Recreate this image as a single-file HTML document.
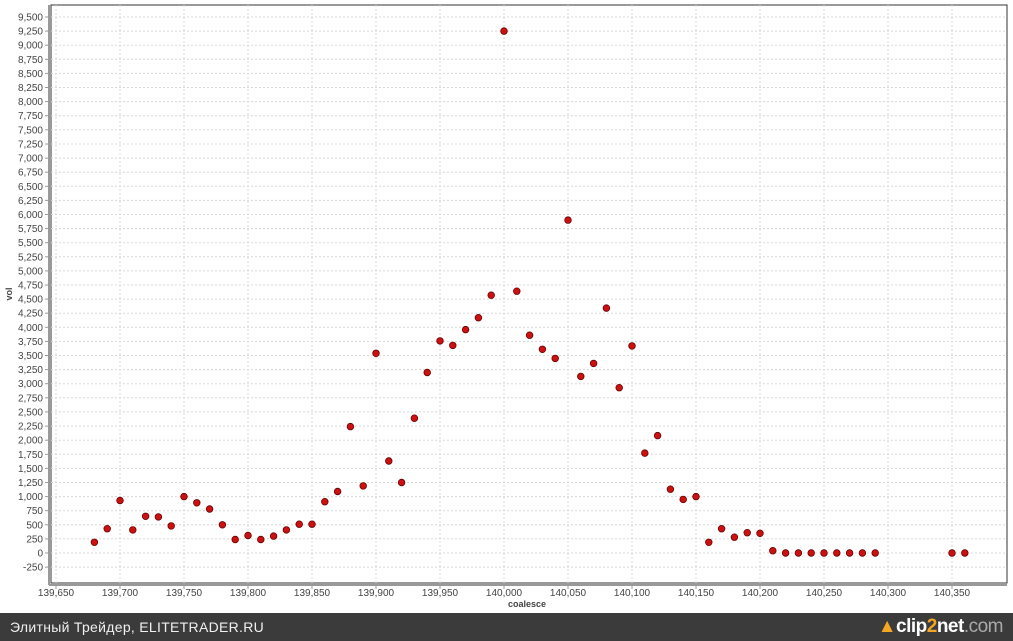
<!DOCTYPE html>
<html><head><meta charset="utf-8"><style>
html,body{margin:0;padding:0;width:1013px;height:641px;overflow:hidden;background:#fff;font-family:"Liberation Sans","DejaVu Sans",sans-serif}
#foot{position:absolute;left:0;top:613px;width:1013px;height:28px;background:#3b3b3b;color:#f0f0f0;font-size:14px;line-height:28px}
</style></head><body>
<svg id="s" width="1013" height="613" style="position:absolute;left:0;top:0" font-family="Liberation Sans, DejaVu Sans, sans-serif" font-size="10" fill="#444"></svg>
<div id="foot"><span style="position:absolute;left:10px;top:0;letter-spacing:0.3px">Элитный Трейдер, ELITETRADER.RU</span>
<span style="position:absolute;right:10px;top:0;font-size:19px;font-weight:bold;letter-spacing:-0.5px"><span style="color:#f5a623">▲</span><span style="color:#fff">clip</span><span style="color:#f5a623">2</span><span style="color:#fff">net</span><span style="color:#aaa;font-weight:normal">.com</span></span></div>
<script>
var s=document.getElementById('s'),h='';
var L=51,T=5,R=1007,B=583;
function X(v){return 56+(v-139650)*1.28}
function Y(v){return 553-v/250*14.105}
h+='<rect x="'+L+'" y="'+T+'" width="'+(R-L)+'" height="'+(B-T)+'" fill="#fff" stroke="#333" stroke-width="1"/>';
for(var v=-250;v<=9500;v+=250){var y=Y(v).toFixed(1);h+='<line x1="'+L+'" x2="'+R+'" y1="'+y+'" y2="'+y+'" stroke="#d8d8d8" stroke-dasharray="2,2"/>';
h+='<line x1="45" x2="49" y1="'+y+'" y2="'+y+'" stroke="#999"/>';
h+='<text x="43" y="'+(+y+3.5)+'" text-anchor="end">'+v.toLocaleString('en-US')+'</text>';}
for(var v=139650;v<=140350;v+=50){var x=X(v).toFixed(1);h+='<line y1="'+T+'" y2="'+B+'" x1="'+x+'" x2="'+x+'" stroke="#d8d8d8" stroke-dasharray="2,2"/>';
h+='<line y1="585" y2="589" x1="'+x+'" x2="'+x+'" stroke="#999"/>';
h+='<text x="'+x+'" y="596" text-anchor="middle">'+v.toLocaleString('en-US')+'</text>';}
h+='<line x1="49" x2="49" y1="'+T+'" y2="585" stroke="#999" stroke-width="2"/>';
h+='<line x1="49" x2="'+R+'" y1="585" y2="585" stroke="#999" stroke-width="2"/>';
h+='<text x="527" y="607" text-anchor="middle" font-weight="bold" font-size="9">coalesce</text>';
h+='<text transform="translate(12,294) rotate(-90)" text-anchor="middle" font-weight="bold" font-size="9">vol</text>';
var d=[190,430,930,410,650,640,480,1000,890,780,500,240,310,240,300,410,510,510,910,1090,2240,1190,3540,1630,1250,2390,3200,3760,3680,3960,4170,4570,9250,4640,3860,3610,3450,5900,3130,3360,4340,2930,3670,1770,2080,1130,950,1000,190,430,280,360,350,40,0,0,0,0,0,0,0,0];
for(var i=0;i<d.length;i++){h+='<circle cx="'+X(139680+i*10).toFixed(1)+'" cy="'+Y(d[i]).toFixed(1)+'" r="3.3" fill="#cc1111" stroke="#6a0000" stroke-width="0.8"/>';}
[140350,140360].forEach(function(v){h+='<circle cx="'+X(v)+'" cy="'+Y(0)+'" r="3.3" fill="#cc1111" stroke="#6a0000" stroke-width="0.8"/>';});
s.innerHTML=h;
</script>
</body></html>
